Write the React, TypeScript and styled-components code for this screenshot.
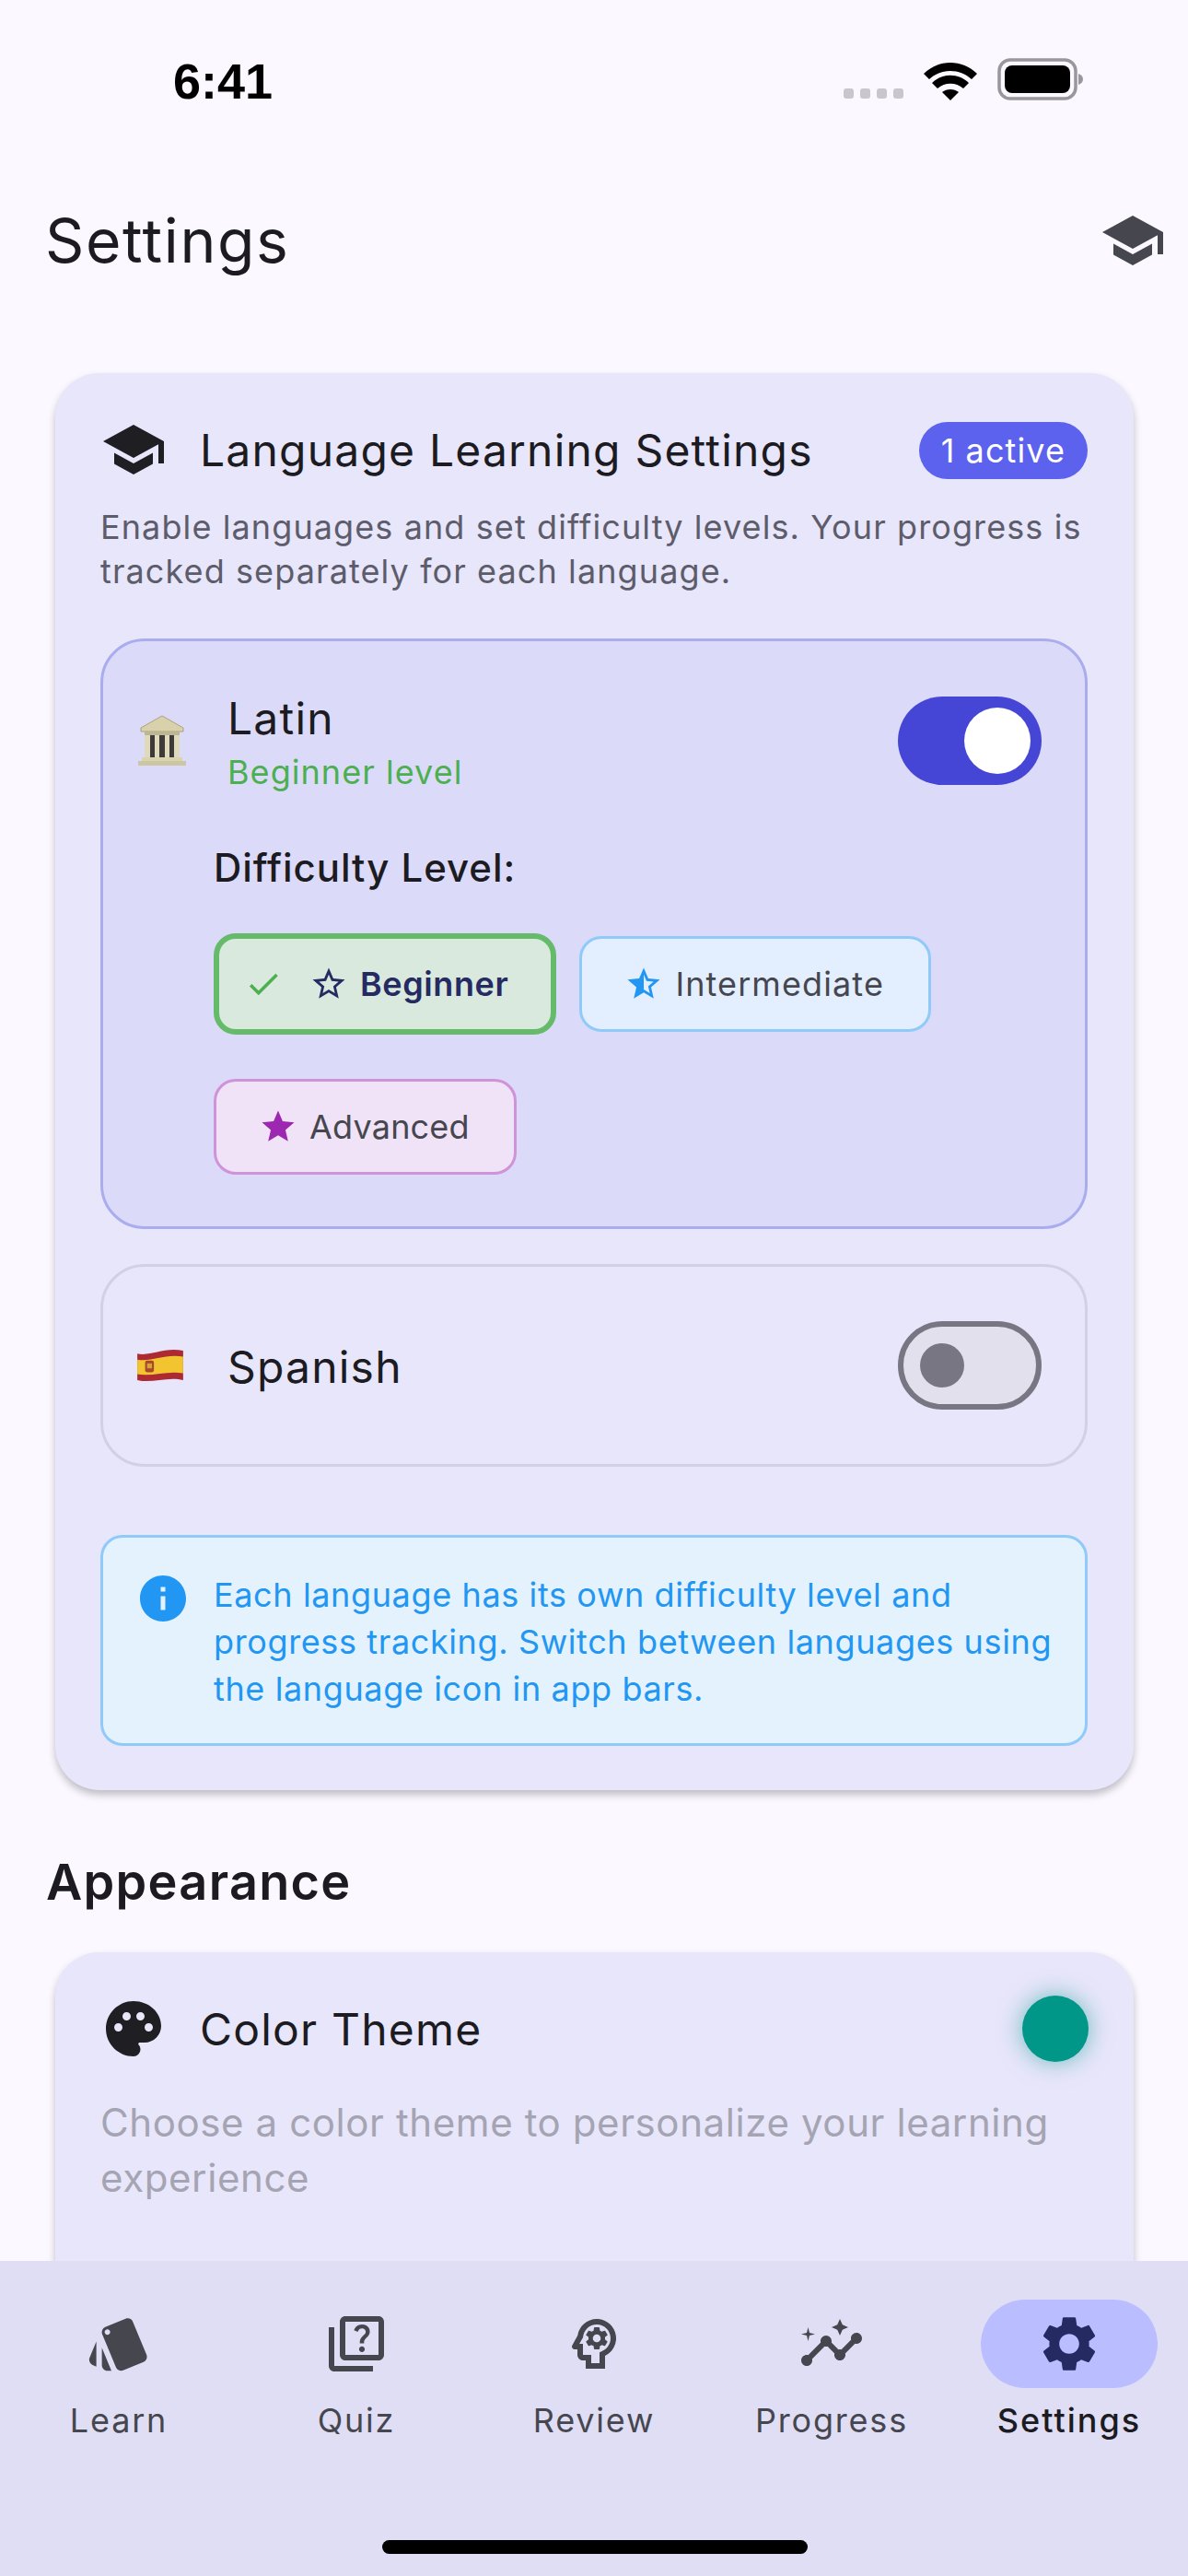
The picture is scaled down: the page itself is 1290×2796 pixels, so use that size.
import React from 'react';
import styled, { createGlobalStyle } from 'styled-components';
import {
  MdCheck,
  MdInfo,
  MdInsights,
  MdOutlinePsychology,
  MdOutlineQuiz,
  MdPalette,
  MdSchool,
  MdSettings,
  MdStar,
  MdStarBorder,
  MdStarHalf,
  MdStyle,
} from 'react-icons/md';

const GlobalStyle = createGlobalStyle`
  html, body {
    margin: 0;
    padding: 0;
    background: #fbf8ff;
  }
  body {
    font-family: Inter, "Noto Sans", sans-serif;
    color: #1b1b21;
  }
  * {
    box-sizing: border-box;
  }
`;

const Screen = styled.div`
  width: 1290px;
  height: 2796px;
  display: flex;
  flex-direction: column;
  overflow: hidden;
  background: #fbf8ff;
`;

const StatusBar = styled.div`
  height: 170px;
  flex: none;
  display: flex;
  justify-content: space-between;
  padding: 58px 0 0 188px;
`;

const Clock = styled.div`
  font-family: "Liberation Sans", sans-serif;
  font-weight: 700;
  font-size: 54px;
  line-height: 60px;
  color: #000;
`;

const StatusIcons = styled.div`
  display: flex;
  align-items: flex-start;
  padding: 5px 114px 0 0;
`;

const AppBar = styled.header`
  height: 185px;
  flex: none;
  display: flex;
  align-items: flex-start;
  justify-content: space-between;
  padding: 49px 24px 0 49px;
`;

const PageTitle = styled.h1`
  margin: 0;
  font-size: 66px;
  line-height: 84px;
  font-weight: 400;
  letter-spacing: 1.6px;
`;

const AppBarIcon = styled.div`
  display: flex;
  font-size: 72px;
  color: #46464f;
  padding-top: 6px;
`;

const Content = styled.main`
  flex: 1;
  min-height: 0;
  overflow: hidden;
  display: flex;
  flex-direction: column;
  padding: 50px 59px 0 60px;
`;

const Card = styled.section`
  flex: none;
  background: #e8e6fb;
  border-radius: 48px;
  box-shadow: 0 5px 9px rgba(0, 0, 0, 0.24);
  padding: 46px 50px 48px 49px;
`;

const ClippedCard = styled(Card)`
  height: 500px;
  margin-top: 36px;
  padding-right: 49px;
`;

const CardHead = styled.div`
  display: flex;
  align-items: center;
  gap: 36px;
  height: 74px;
`;

const HeadIcon = styled.div`
  display: flex;
  font-size: 72px;
  color: #1f1f23;
`;

const CardTitle = styled.h2`
  flex: 1;
  margin: 0;
  padding-top: 1px;
  font-size: 48px;
  line-height: 60px;
  font-weight: 400;
  letter-spacing: 1.2px;
`;

const CountBadge = styled.span`
  height: 62px;
  margin-top: 2px;
  padding: 0 24px;
  border-radius: 31px;
  display: flex;
  align-items: center;
  background: #5c62ee;
  color: #fff;
  font-size: 36px;
  font-weight: 400;
  letter-spacing: 1.1px;
`;

const CardIntro = styled.p`
  margin: 23px 0 0;
  font-size: 36px;
  line-height: 48px;
  letter-spacing: 1.1px;
  color: #5d5c6b;
`;

const LanguageCard = styled.div<{ $active?: boolean }>`
  margin-top: ${props => (props.$active ? '49px' : '38px')};
  border-radius: 48px;
  border: 3px solid ${props => (props.$active ? '#a9adee' : '#d2d0e6')};
  background: ${props => (props.$active ? '#dcdaf9' : 'transparent')};
  padding: ${props => (props.$active ? '44px 47px 0 37px' : '0 47px 0 37px')};
  height: ${props => (props.$active ? '641px' : '220px')};
`;

const LanguageRow = styled.div<{ $tall?: boolean }>`
  display: flex;
  align-items: center;
  height: ${props => (props.$tall ? '100%' : '128px')};
`;

const FlagSlot = styled.div`
  width: 98px;
  flex: none;
  display: flex;
  align-items: center;
`;

const LanguageText = styled.div`
  flex: 1;
  display: flex;
  flex-direction: column;
  padding-top: 4px;
`;

const LanguageName = styled.div`
  font-size: 48px;
  line-height: 64px;
  font-weight: 400;
  letter-spacing: 1.2px;
`;

const LanguageLevel = styled.div`
  font-size: 36px;
  line-height: 52px;
  letter-spacing: 1.05px;
  color: #4caf50;
`;

const Toggle = styled.div<{ $on?: boolean }>`
  width: 156px;
  height: 96px;
  flex: none;
  border-radius: 48px;
  display: flex;
  align-items: center;
  background: ${props => (props.$on ? '#4546d6' : '#e2e0ed')};
  border: ${props => (props.$on ? 'none' : '6px solid #777682')};
  justify-content: ${props => (props.$on ? 'flex-end' : 'flex-start')};
  padding: ${props => (props.$on ? '0 12px' : '0 18px')};
`;

const Thumb = styled.div<{ $on?: boolean }>`
  width: ${props => (props.$on ? '72px' : '48px')};
  height: ${props => (props.$on ? '72px' : '48px')};
  border-radius: 50%;
  background: ${props => (props.$on ? '#fff' : '#777682')};
`;

const DifficultySection = styled.div`
  padding-left: 83px;
  margin-top: 46px;
`;

const DifficultyLabel = styled.div`
  font-size: 42px;
  line-height: 56px;
  font-weight: 450;
  letter-spacing: 0.95px;
`;

const Chips = styled.div`
  display: flex;
  flex-wrap: wrap;
  align-items: center;
  column-gap: 25px;
  row-gap: 48px;
  margin-top: 43px;
`;

const Chip = styled.div<{ $bg: string; $line: string; $selected?: boolean }>`
  height: ${props => (props.$selected ? '110px' : '104px')};
  display: flex;
  align-items: center;
  padding: 0 ${props => (props.$selected ? '46px' : '48px')} 0 ${props => (props.$selected ? '27px' : '46px')};
  border-radius: 24px;
  background: ${props => props.$bg};
  border: ${props => (props.$selected ? '6px' : '3px')} solid ${props => props.$line};
`;

const ChipIcon = styled.span<{ $color: string; $gap: number }>`
  display: flex;
  font-size: 42px;
  color: ${props => props.$color};
  margin-right: ${props => props.$gap}px;
`;

const ChipLabel = styled.span<{ $selected?: boolean; $spacing: number }>`
  font-size: 36px;
  font-weight: ${props => (props.$selected ? 600 : 400)};
  letter-spacing: ${props => props.$spacing}px;
  color: ${props => (props.$selected ? '#262a62' : '#46464f')};
`;

const InfoBox = styled.div`
  margin-top: 74px;
  height: 229px;
  border-radius: 24px;
  border: 3px solid #90caf9;
  background: #e3f2fd;
  display: flex;
  gap: 25px;
  padding: 37px 20px 0 35px;
`;

const InfoIcon = styled.div`
  display: flex;
  flex: none;
  font-size: 60px;
  height: 60px;
  margin-top: -1px;
  color: #2196f3;
`;

const InfoText = styled.div`
  font-size: 36px;
  line-height: 51px;
  letter-spacing: 0.62px;
  color: #2196f3;
`;

const SectionTitle = styled.h3`
  margin: 60px 0 0 -10px;
  font-size: 54px;
  line-height: 80px;
  font-weight: 600;
  letter-spacing: 1.3px;
`;

const ColorDot = styled.div`
  width: 72px;
  height: 72px;
  border-radius: 50%;
  background: #009688;
  box-shadow: 0 0 26px rgba(0, 150, 136, 0.55);
`;

const ThemeHint = styled.p`
  margin: 35px 0 0;
  font-size: 42px;
  line-height: 60px;
  letter-spacing: 0.6px;
  color: #a5a4b2;
`;

const BottomNav = styled.nav`
  height: 342px;
  flex: none;
  position: relative;
  z-index: 1;
  background: #e0def5;
  display: grid;
  grid-template-columns: repeat(5, 1fr);
  padding: 42px 0 0 0;
`;

const NavItem = styled.div`
  display: flex;
  flex-direction: column;
  align-items: center;
`;

const NavIcon = styled.div<{ $active?: boolean }>`
  width: 192px;
  height: 96px;
  border-radius: 48px;
  display: flex;
  align-items: center;
  justify-content: center;
  font-size: 72px;
  background: ${props => (props.$active ? '#babdff' : 'transparent')};
  color: ${props => (props.$active ? '#262a62' : '#46464f')};
`;

const NavLabel = styled.div<{ $active?: boolean }>`
  margin-top: 13px;
  font-size: 36px;
  line-height: 44px;
  font-weight: ${props => (props.$active ? 500 : 400)};
  letter-spacing: ${props => (props.$active ? '2px' : '1.8px')};
  color: ${props => (props.$active ? '#1b1b21' : '#46464f')};
`;

const HomeBar = styled.div`
  position: absolute;
  left: 415px;
  bottom: 24px;
  width: 462px;
  height: 15px;
  border-radius: 8px;
  background: #000;
`;

const StatusGlyphs = () => (
  <svg width="260" height="52" viewBox="0 0 260 52">
    <g fill="#c9c7cc">
      <rect x="0" y="33" width="11" height="11" rx="3" />
      <rect x="18" y="33" width="11" height="11" rx="3" />
      <rect x="36" y="33" width="11" height="11" rx="3" />
      <rect x="54" y="33" width="11" height="11" rx="3" />
    </g>
    <path d="M87 17 C103 1 129 1 145 17 L139 23 C126 11 106 11 93 23 Z" fill="#000" />
    <path d="M96 27 C107 16 125 16 136 27 L130 33 C122 26 110 26 102 33 Z" fill="#000" />
    <path d="M107 37 C112 33 120 33 125 37 L116 46 Z" fill="#000" />
    <rect x="169" y="2" width="83" height="42" rx="12" fill="none" stroke="#99979c" strokeWidth="3.5" />
    <rect x="175" y="8" width="71" height="30" rx="8" fill="#000" />
    <path d="M255 17 C258 18 260 20 260 23 C260 26 258 28 255 29 Z" fill="#99979c" />
  </svg>
);

const TempleGlyph = () => (
  <svg width="54" height="56" viewBox="0 0 54 56">
    <path d="M27 1 L50 14 L50 18 L4 18 L4 14 Z" fill="#d8d1ab" stroke="#aaa37f" strokeWidth="1" />
    <rect x="8" y="18" width="38" height="4" fill="#bdb692" />
    <rect x="9" y="22" width="36" height="24" fill="#3d3a3a" />
    <g fill="#e0dabb">
      <rect x="8" y="22" width="6" height="25" />
      <rect x="19" y="22" width="5" height="25" />
      <rect x="30" y="22" width="5" height="25" />
      <rect x="40" y="22" width="6" height="25" />
    </g>
    <rect x="5" y="46" width="44" height="4" fill="#d9d3b0" />
    <rect x="1" y="50" width="52" height="5" fill="#cdc6a2" />
  </svg>
);

const SpainFlag = () => (
  <svg width="50" height="36" viewBox="0 0 47 34">
    <path d="M0 5 C14 8 27 -2 47 2 L47 32 C30 28 15 36 0 32 Z" fill="#ad2a33" />
    <path d="M0 11 C14 14 27 5 47 8 L47 25 C30 22 15 29 0 26 Z" fill="#f2c530" />
    <rect x="8" y="12" width="9" height="12" rx="2" fill="#a8482c" />
    <rect x="10" y="15" width="5" height="5" fill="#d9a13a" />
  </svg>
);

const navItems = [
  { label: 'Learn', icon: <MdStyle /> },
  { label: 'Quiz', icon: <MdOutlineQuiz /> },
  { label: 'Review', icon: <MdOutlinePsychology /> },
  { label: 'Progress', icon: <MdInsights /> },
  { label: 'Settings', icon: <MdSettings />, active: true },
];

const App: React.FC = () => {
  return (
    <Screen>
      <GlobalStyle />
      <StatusBar>
        <Clock>6:41</Clock>
        <StatusIcons>
          <StatusGlyphs />
        </StatusIcons>
      </StatusBar>
      <AppBar>
        <PageTitle>Settings</PageTitle>
        <AppBarIcon>
          <MdSchool />
        </AppBarIcon>
      </AppBar>
      <Content>
        <Card>
          <CardHead>
            <HeadIcon>
              <MdSchool />
            </HeadIcon>
            <CardTitle>Language Learning Settings</CardTitle>
            <CountBadge>1 active</CountBadge>
          </CardHead>
          <CardIntro>
            Enable languages and set difficulty levels. Your progress is tracked separately for each language.
          </CardIntro>
          <LanguageCard $active>
            <LanguageRow>
              <FlagSlot>
                <TempleGlyph />
              </FlagSlot>
              <LanguageText>
                <LanguageName>Latin</LanguageName>
                <LanguageLevel>Beginner level</LanguageLevel>
              </LanguageText>
              <Toggle $on>
                <Thumb $on />
              </Toggle>
            </LanguageRow>
            <DifficultySection>
              <DifficultyLabel>Difficulty Level:</DifficultyLabel>
              <Chips>
                <Chip $bg="#d9e9dd" $line="#66bb6a" $selected>
                  <ChipIcon $color="#4caf50" $gap={29}>
                    <MdCheck />
                  </ChipIcon>
                  <ChipIcon $color="#262a62" $gap={13}>
                    <MdStarBorder />
                  </ChipIcon>
                  <ChipLabel $selected $spacing={0.6}>Beginner</ChipLabel>
                </Chip>
                <Chip $bg="#e3eeff" $line="#90caf9">
                  <ChipIcon $color="#2196f3" $gap={13}>
                    <MdStarHalf />
                  </ChipIcon>
                  <ChipLabel $spacing={1.1}>Intermediate</ChipLabel>
                </Chip>
                <Chip $bg="#f0e2f7" $line="#ce93d8">
                  <ChipIcon $color="#9c27b0" $gap={13}>
                    <MdStar />
                  </ChipIcon>
                  <ChipLabel $spacing={0.2}>Advanced</ChipLabel>
                </Chip>
              </Chips>
            </DifficultySection>
          </LanguageCard>
          <LanguageCard>
            <LanguageRow $tall>
              <FlagSlot>
                <SpainFlag />
              </FlagSlot>
              <LanguageText>
                <LanguageName>Spanish</LanguageName>
              </LanguageText>
              <Toggle>
                <Thumb />
              </Toggle>
            </LanguageRow>
          </LanguageCard>
          <InfoBox>
            <InfoIcon>
              <MdInfo />
            </InfoIcon>
            <InfoText>
              Each language has its own difficulty level and progress tracking. Switch between languages using the
              language icon in app bars.
            </InfoText>
          </InfoBox>
        </Card>
        <SectionTitle>Appearance</SectionTitle>
        <ClippedCard>
          <CardHead>
            <HeadIcon>
              <MdPalette />
            </HeadIcon>
            <CardTitle>Color Theme</CardTitle>
            <ColorDot />
          </CardHead>
          <ThemeHint>Choose a color theme to personalize your learning experience</ThemeHint>
        </ClippedCard>
      </Content>
      <BottomNav>
        {navItems.map(item => (
          <NavItem key={item.label}>
            <NavIcon $active={item.active}>{item.icon}</NavIcon>
            <NavLabel $active={item.active}>{item.label}</NavLabel>
          </NavItem>
        ))}
        <HomeBar />
      </BottomNav>
    </Screen>
  );
};

export default App;
